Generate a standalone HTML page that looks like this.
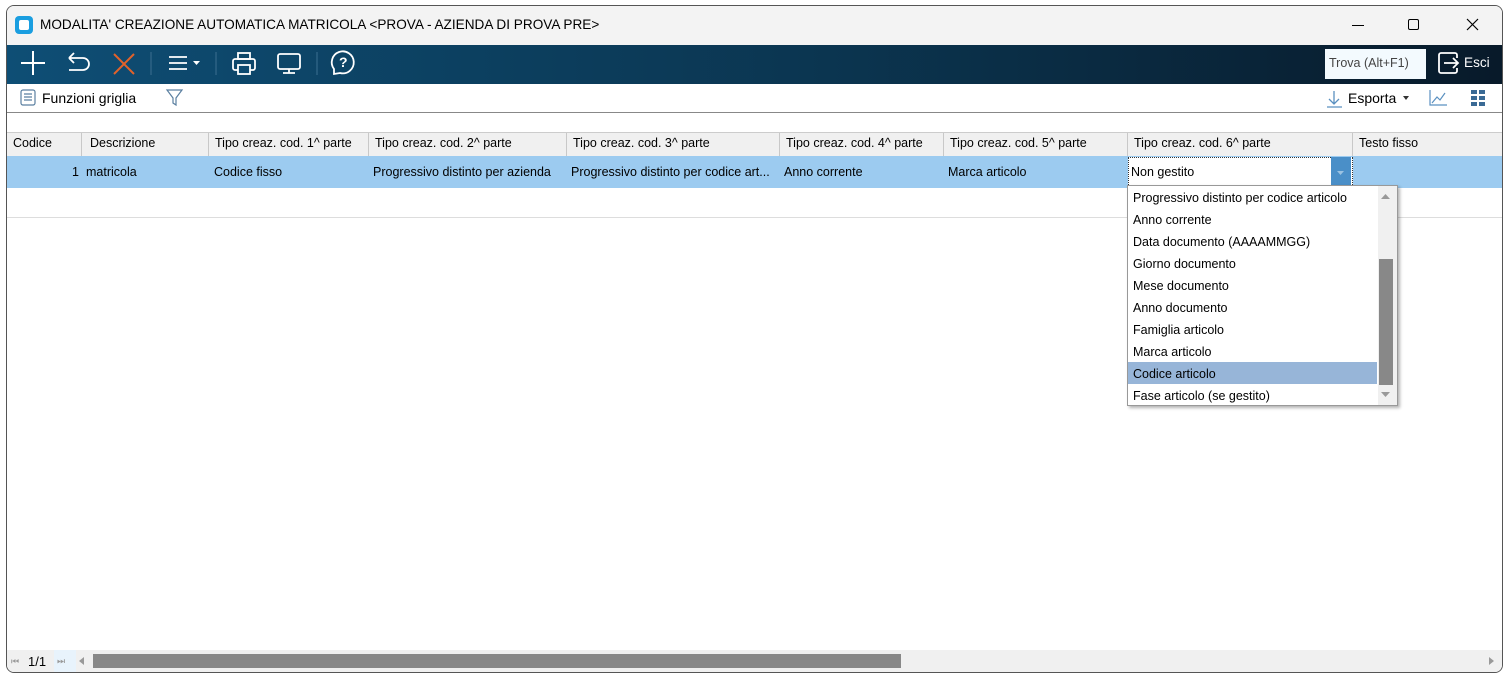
<!DOCTYPE html><html><head><style>
*{box-sizing:border-box;margin:0;padding:0}
body{width:1506px;height:676px;background:#fff;font-family:"Liberation Sans",sans-serif;font-size:12px;color:#000;position:relative;overflow:hidden}
.win{position:absolute;left:6px;top:5px;width:1497px;height:668px;border:1px solid #555;border-radius:8px;overflow:hidden;background:#fff}
.title{position:absolute;left:0;top:0;width:100%;height:39px;background:#f3f3f3}
.tb{position:absolute;left:0;top:39px;width:100%;height:39px;background:linear-gradient(90deg,#0e4e75,#0b3550 55%,#081a2a)}
.t{position:absolute;white-space:nowrap}
.hdr{position:absolute;top:126px;height:25px;left:0;width:100%;background:#f0f0f0;border-top:1px solid #ccc;border-bottom:1px solid #ccc}
.hc{position:absolute;top:0;height:24px;border-right:1px solid #c8c8c8;padding:3px 0 0 6px;font-size:12.5px;white-space:nowrap;overflow:hidden}
.row{position:absolute;top:150px;height:32px;left:0;width:100%;background:#9ccbf0}
.rc{position:absolute;top:9px;font-size:12.5px;white-space:nowrap}
.dd{position:absolute;left:1120px;top:179px;width:271px;height:221px;background:#fff;border:1px solid #999;box-shadow:2px 2px 3px rgba(0,0,0,.3)}
.di{position:absolute;left:5px;font-size:12.5px;white-space:nowrap}
</style></head><body>
<div class="win">
<div class="title">
<div style="position:absolute;left:8px;top:10px;width:18px;height:18px;border-radius:4px;background:#1a9ee0"><div style="position:absolute;left:4px;top:4px;width:10px;height:10px;border-radius:2px;background:#fff"></div></div>
<div class="t" style="left:33px;top:11px;font-size:13.6px">MODALITA' CREAZIONE AUTOMATICA MATRICOLA &lt;PROVA - AZIENDA DI PROVA PRE&gt;</div>
<div style="position:absolute;left:1345px;top:19px;width:12px;height:1px;background:#000"></div>
<div style="position:absolute;left:1401px;top:13px;width:11px;height:11px;border:1px solid #000;border-radius:2px"></div>
<svg style="position:absolute;left:1459px;top:12px" width="13" height="13"><path d="M1 1L12 12M12 1L1 12" stroke="#000" stroke-width="1.2"/></svg>
</div>
<div class="tb">
<svg width="360" height="39" style="position:absolute;left:0;top:0" fill="none" stroke-width="2">
<path d="M14 18H38M26 6V30" stroke="#fff"/>
<path d="M62 13H76A6 6 0 0 1 76 25H62M62 13L67 8M62 13L67 18" stroke="#fff" stroke-width="1.8"/>
<path d="M107 9L127 29M127 9L107 29" stroke="#e2622a"/>
<path d="M144 7V30" stroke="#3c6f90" stroke-width="1"/>
<path d="M162 12H180M162 18H180M162 24H180" stroke="#fff" stroke-width="1.8"/><path d="M186 16H193L189.5 20Z" fill="#fff" stroke="none"/>
<path d="M209 7V30" stroke="#3c6f90" stroke-width="1"/>
<rect x="226" y="14" width="22" height="11" rx="2" stroke="#fff" stroke-width="1.8"/><rect x="231" y="8" width="12" height="6" stroke="#fff" stroke-width="1.8"/><rect x="231" y="20" width="12" height="9" stroke="#fff" stroke-width="1.8" fill="#0d4a70"/>
<rect x="271" y="9" width="22" height="15" rx="2" stroke="#fff" stroke-width="1.8"/><path d="M276 28H288M282 24V28" stroke="#fff" stroke-width="1.8"/>
<path d="M310 7V30" stroke="#3c6f90" stroke-width="1"/>
<path d="M327 29V24A11 11 0 1 1 333 28Z" stroke="#fff" stroke-width="1.8"/>
</svg>
<div class="t" style="left:332px;top:9px;color:#fff;font-size:14px;font-weight:bold">?</div>
<div style="position:absolute;left:1318px;top:4px;width:101px;height:30px;background:#f3fafe"></div>
<div class="t" style="left:1322px;top:11px;color:#444;font-size:12.5px">Trova (Alt+F1)</div>
<svg width="24" height="24" style="position:absolute;left:1430px;top:6px" fill="none" stroke="#fff" stroke-width="1.8"><path d="M10 2H4A2 2 0 0 0 2 4V20A2 2 0 0 0 4 22H10M10 2H18A2 2 0 0 1 20 4V7M20 17V20A2 2 0 0 1 18 22H10"/><path d="M7 12H21M16 7L21 12L16 17"/></svg>
<div class="t" style="left:1457px;top:10px;color:#fff;font-size:13.6px">Esci</div>
</div>
<svg width="20" height="20" style="position:absolute;left:12px;top:82px" fill="none" stroke="#5a7fa0" stroke-width="1.2"><rect x="2" y="2" width="14" height="15" rx="2"/><path d="M5 6H13M5 9H13M5 12H13"/></svg>
<div class="t" style="left:35px;top:84px;font-size:14px">Funzioni griglia</div>
<svg width="20" height="20" style="position:absolute;left:158px;top:82px" fill="none" stroke="#5a7fa0" stroke-width="1.2"><path d="M2 2H17L11 10V17L8 15V10Z"/></svg>
<svg width="20" height="20" style="position:absolute;left:1318px;top:83px" fill="none" stroke="#5a90c0" stroke-width="1.3"><path d="M9 2V15M4 10L9 15L14 10M2 18H17"/></svg>
<div class="t" style="left:1341px;top:84px;font-size:14px">Esporta</div>
<svg width="8" height="5" style="position:absolute;left:1396px;top:90px"><path d="M0 0H6L3 4Z" fill="#333"/></svg>
<svg width="20" height="20" style="position:absolute;left:1421px;top:82px" fill="none" stroke="#5a90c0" stroke-width="1.2"><path d="M2 2V17H19"/><path d="M4 15L9 9L12 12L17 5"/></svg>
<svg width="18" height="18" style="position:absolute;left:1463px;top:83px" fill="#3a6a95"><rect x="1" y="1" width="6" height="4"/><rect x="9" y="1" width="6" height="4"/><rect x="1" y="7" width="6" height="4"/><rect x="9" y="7" width="6" height="4"/><rect x="1" y="13" width="6" height="4"/><rect x="9" y="13" width="6" height="4"/></svg>
<div style="position:absolute;left:0;top:106px;width:100%;height:1px;background:#888"></div>
<div class="hdr">
<div class="hc" style="left:0;width:75px">Codice</div>
<div class="hc" style="left:75px;width:127px;padding-left:8px">Descrizione</div>
<div class="hc" style="left:202px;width:160px">Tipo creaz. cod. 1^ parte</div>
<div class="hc" style="left:362px;width:198px">Tipo creaz. cod. 2^ parte</div>
<div class="hc" style="left:560px;width:213px">Tipo creaz. cod. 3^ parte</div>
<div class="hc" style="left:773px;width:164px">Tipo creaz. cod. 4^ parte</div>
<div class="hc" style="left:937px;width:184px">Tipo creaz. cod. 5^ parte</div>
<div class="hc" style="left:1121px;width:225px">Tipo creaz. cod. 6^ parte</div>
<div class="hc" style="left:1346px;width:160px">Testo fisso</div>
</div>
<div class="row">
<div class="rc" style="left:65px">1</div>
<div class="rc" style="left:79px">matricola</div>
<div class="rc" style="left:207px">Codice fisso</div>
<div class="rc" style="left:366px">Progressivo distinto per azienda</div>
<div class="rc" style="left:564px">Progressivo distinto per codice art...</div>
<div class="rc" style="left:777px">Anno corrente</div>
<div class="rc" style="left:941px">Marca articolo</div>
<div style="position:absolute;left:1121px;top:1px;width:225px;height:30px;background:#fff;border:1px dotted #333"></div>
<div class="rc" style="left:1124px">Non gestito</div>
<div style="position:absolute;left:1324px;top:1px;width:20px;height:30px;background:#4a8fc8"></div>
<svg width="8" height="5" style="position:absolute;left:1330px;top:15px"><path d="M0 0H7L3.5 4Z" fill="#9cc3e2"/></svg>
</div>
<div style="position:absolute;left:0;top:211px;width:100%;height:1px;background:#ddd"></div>
<div class="dd">
<div class="di" style="top:5px">Progressivo distinto per codice articolo</div>
<div class="di" style="top:27px">Anno corrente</div>
<div class="di" style="top:49px">Data documento (AAAAMMGG)</div>
<div class="di" style="top:71px">Giorno documento</div>
<div class="di" style="top:93px">Mese documento</div>
<div class="di" style="top:115px">Anno documento</div>
<div class="di" style="top:137px">Famiglia articolo</div>
<div class="di" style="top:159px">Marca articolo</div>
<div style="position:absolute;left:0;top:176px;width:249px;height:22px;background:#97b5d8"></div>
<div class="di" style="top:181px">Codice articolo</div>
<div class="di" style="top:203px">Fase articolo (se gestito)</div>
<div style="position:absolute;left:250px;top:0;width:19px;height:219px;background:#f0f0f0"></div>
<div style="position:absolute;left:251px;top:73px;width:14px;height:126px;background:#888"></div>
<svg width="10" height="6" style="position:absolute;left:253px;top:8px"><path d="M0 5H9L4.5 0Z" fill="#999"/></svg>
<svg width="10" height="6" style="position:absolute;left:253px;top:206px"><path d="M0 0H9L4.5 5Z" fill="#999"/></svg>
</div>
<div style="position:absolute;left:0;top:644px;width:100%;height:22px;background:#f0f0f0"></div>
<div class="t" style="left:4px;top:650px;font-size:9px;color:#999">⏮</div>
<div class="t" style="left:21px;top:648px;font-size:13px">1/1</div>
<div style="position:absolute;left:47px;top:644px;width:22px;height:22px;background:#e8f3fc"></div>
<div class="t" style="left:50px;top:650px;font-size:9px;color:#999">⏭</div>
<svg width="6" height="8" style="position:absolute;left:72px;top:651px"><path d="M5 0V8L0 4Z" fill="#999"/></svg>
<div style="position:absolute;left:86px;top:648px;width:808px;height:14px;background:#888"></div>
<svg width="6" height="8" style="position:absolute;left:1482px;top:651px"><path d="M0 0V8L5 4Z" fill="#999"/></svg>
</div>
</body></html>
